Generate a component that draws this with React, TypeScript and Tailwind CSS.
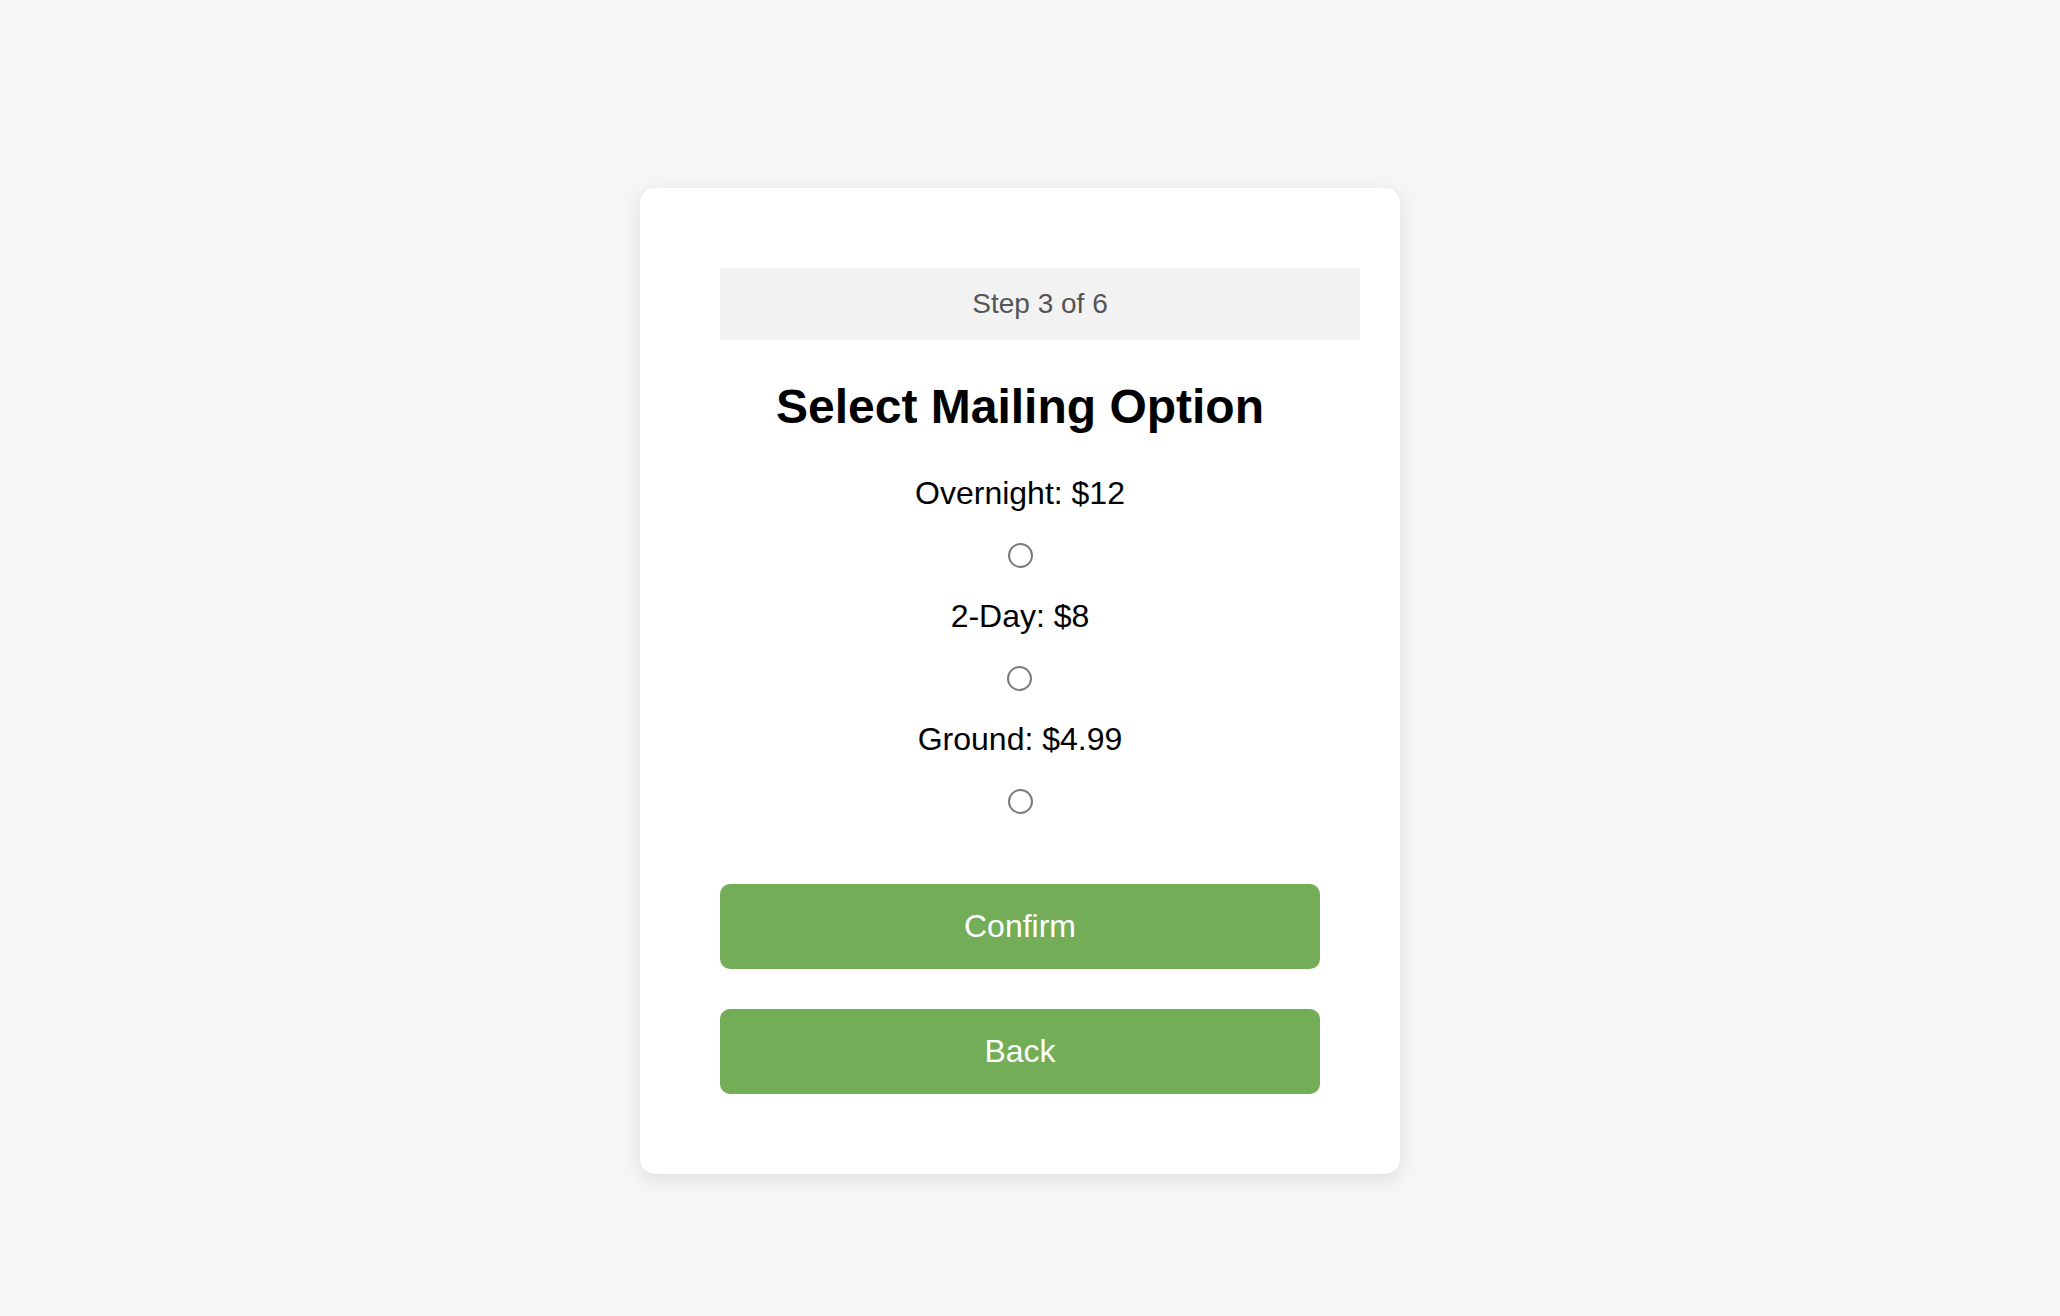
import React from "react";

const options = ["Overnight: $12", "2-Day: $8", "Ground: $4.99"];

export default function App() {
  return (
    <div
      className="min-h-screen w-full bg-[#f6f6f6] pt-[188px] pb-[140px] pl-[640px]"
      style={{ fontFamily: '"Liberation Sans", Arial, Helvetica, sans-serif' }}
    >
      <div className="w-[760px] rounded-[15px] bg-white px-[80px] py-[80px] shadow-[0_5px_20px_rgba(0,0,0,0.1)]">
        <div className="flex h-[72px] w-[640px] items-center justify-center bg-[#f2f2f2] text-[28px] text-[#555555]">
          Step 3 of 6
        </div>
        <h2 className="mt-[40px] text-center text-[48px] font-bold leading-[54px] text-black">
          Select Mailing Option
        </h2>
        <div className="mt-[41px] flex flex-col items-center">
          {options.map((o, i) => (
            <div key={o} className={`flex flex-col items-center ${i > 0 ? "mt-[30px]" : ""}`}>
              <label className="text-center text-[32px] leading-[36px] text-black">{o}</label>
              <span className="mt-[32px] block h-[25px] w-[25px] rounded-full border-2 border-[#7b7b7b] bg-white" />
            </div>
          ))}
        </div>
        <button className="mt-[70px] flex h-[85px] w-[600px] items-center justify-center rounded-[10px] bg-[#74ad57] pb-[2px] text-[32px] text-white">
          Confirm
        </button>
        <button className="mt-[40px] flex h-[85px] w-[600px] items-center justify-center rounded-[10px] bg-[#74ad57] pb-[2px] text-[32px] text-white">
          Back
        </button>
      </div>
    </div>
  );
}
